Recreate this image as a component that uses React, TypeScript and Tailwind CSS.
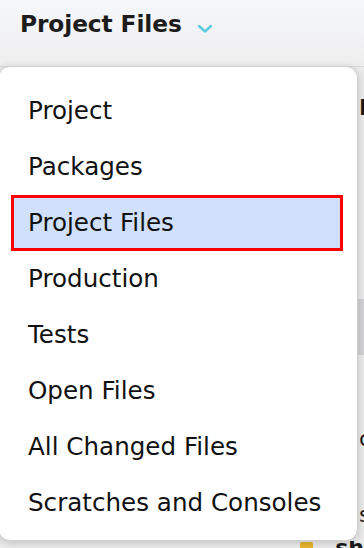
import React from "react";

const items = [
  "Project",
  "Packages",
  "Project Files",
  "Production",
  "Tests",
  "Open Files",
  "All Changed Files",
  "Scratches and Consoles",
];

export default function App() {
  return (
    <div className="relative w-[364px] h-[548px] overflow-hidden bg-[#f5f6f8] font-['DejaVu_Sans',sans-serif] text-[#1a1a1a]">
      {/* header */}
      <div className="h-[66px] flex items-start pt-[9px] pl-[20px] bg-gradient-to-b from-[#f6f7f9] to-[#eeeeef]">
        <span className="text-[23.3px] font-bold leading-[30px] tracking-[-0.1px] text-[#1c1c1c]">
          Project Files
        </span>
        <svg
          width="16"
          height="10"
          viewBox="0 0 16 10"
          className="ml-[15px] mt-[15px]"
          fill="none"
        >
          <path
            d="M2 2 L8 7.5 L14 2"
            stroke="#5ccbe0"
            strokeWidth="2.4"
            strokeLinecap="round"
            strokeLinejoin="round"
          />
        </svg>
      </div>

      {/* underlying panel (mostly covered by the menu) */}
      <div className="h-[482px] bg-[#ebebeb] border-t border-[#d9d9d9]">
        <div className="h-[28px]" />
        <div className="h-[26px] pl-[359px] text-[22px] font-bold leading-[26px] whitespace-nowrap overflow-hidden">
          Ide
        </div>
        <div className="h-[178px]" />
        <div className="h-[56px] bg-[#d3d3d5]" />
        <div className="h-[72px]" />
        <div className="h-[24px] pl-[359px] text-[22px] leading-[24px] whitespace-nowrap overflow-hidden">
          c
        </div>
        <div className="h-[52px]" />
        <div className="h-[24px] pl-[359px] text-[22px] leading-[24px] whitespace-nowrap overflow-hidden">
          s
        </div>
        <div className="h-[14px]" />
        <div className="h-[22px] flex items-start pl-[279px] gap-[8px] overflow-hidden">
          <span className="text-[22px] leading-[22px] mt-[1px]">ʌ</span>
          <span className="w-[16px] h-[16px] mt-[1px] bg-[#e6b630] rounded-[2px]" />
          <span className="text-[22px] font-bold leading-[22px] mt-[-4px] ml-[14px]">sh</span>
        </div>
      </div>

      {/* dropdown menu overlay */}
      <div className="absolute left-[-2px] top-[66px] w-[360px] h-[475px] rounded-[12px] bg-white border border-[#cfcfcf] shadow-[0_2px_8px_rgba(0,0,0,0.18)] pt-[16px]">
        {items.map((label) => {
          const selected = label === "Project Files";
          return (
            <div
              key={label}
              className={
                selected
                  ? "ml-[12px] w-[332px] h-[56px] flex items-center pl-[14px] border-[3px] border-[#ff0000] bg-[#d0dffa] text-[24.6px] text-[#111111] whitespace-nowrap"
                  : "ml-[12px] w-[332px] h-[56px] flex items-center pl-[14px] border-[3px] border-transparent text-[24.6px] text-[#111111] whitespace-nowrap"
              }
            >
              {label}
            </div>
          );
        })}
      </div>
    </div>
  );
}
